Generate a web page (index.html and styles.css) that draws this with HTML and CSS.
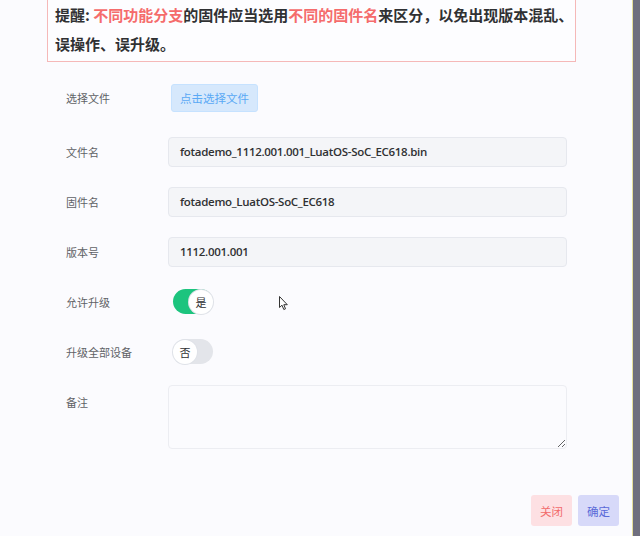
FILE: index.html
```html
<!DOCTYPE html>
<html lang="zh">
<head>
<meta charset="utf-8">
<title>固件上传</title>
<link rel="stylesheet" href="styles.css">
</head>
<body>
<div class="screen">
  <div class="dialog">
    <div class="alert">提醒: <span class="hl">不同功能分支</span>的固件应当选用<span class="hl">不同的固件名</span>来区分，以免出现版本混乱、<br>误操作、误升级。</div>
    <div class="form">
      <div class="row row-first">
        <label class="label">选择文件</label>
        <div class="control"><button class="upload" type="button">点击选择文件</button></div>
      </div>
      <div class="row">
        <label class="label">文件名</label>
        <div class="control"><div class="input">fotademo_1112.001.001_LuatOS-SoC_EC618.bin</div></div>
      </div>
      <div class="row">
        <label class="label">固件名</label>
        <div class="control"><div class="input">fotademo_LuatOS-SoC_EC618</div></div>
      </div>
      <div class="row">
        <label class="label">版本号</label>
        <div class="control"><div class="input">1112.001.001</div></div>
      </div>
      <div class="row">
        <label class="label">允许升级</label>
        <div class="control"><span class="switch on"><span class="knob">是</span></span></div>
      </div>
      <div class="row">
        <label class="label">升级全部设备</label>
        <div class="control"><span class="switch off"><span class="knob">否</span></span></div>
      </div>
      <div class="row row-top">
        <label class="label label-top">备注</label>
        <div class="control"><textarea class="textarea"></textarea></div>
      </div>
    </div>
    <div class="footer">
      <button class="btn btn-close" type="button">关闭</button>
      <button class="btn btn-ok" type="button">确定</button>
    </div>
  </div>
  <div class="strip"></div>
</div>
<svg class="cursor" width="10" height="15" viewBox="0 0 10 15"><path d="M0.5 0.5 L0.5 11.5 L3 9.2 L4.8 13.5 L6.5 12.8 L4.8 8.7 L8.3 8.7 Z" fill="#fff" stroke="#333" stroke-width="1" stroke-linejoin="round"/></svg>
</body>
</html>
```

FILE: styles.css
```css
html, body {
  margin: 0;
  padding: 0;
}
body {
  background: #6f6f7e;
  font-family: "Noto Sans CJK SC", "Noto Sans", sans-serif;
  width: 640px;
  height: 536px;
  overflow: hidden;
  position: relative;
}
.screen {
  display: flex;
  height: 536px;
}
.dialog {
  width: 633px;
  flex: none;
  background: #fbfbfe;
  padding-left: 47px;
  box-sizing: border-box;
  border-right: 1px solid #e6df9a;
  overflow: hidden;
}
.strip {
  flex: 1;
  background: #6f6f7e;
}
.alert {
  width: 529px;
  box-sizing: border-box;
  margin-top: -11px;
  padding: 10px 7px 3px;
  border: 1px solid #f5b8b8;
  background: #fdfdff;
  font-size: 15px;
  font-weight: 700;
  line-height: 29px;
  color: #303133;
  white-space: nowrap;
}
.hl {
  color: #f56c6c;
}
.form {
  margin-top: 7px;
  padding-left: 19px;
}
.row {
  display: flex;
  align-items: center;
  height: 50px;
}
.row-first {
  height: 58px;
}
.row-top {
  align-items: flex-start;
  height: auto;
  padding-top: 8px;
}
.label {
  width: 102px;
  flex: none;
  font-size: 11px;
  color: #606266;
}
.label-top {
  line-height: 34px;
}
.control {
  width: 399px;
}
.upload {
  margin-left: 3px;
  height: 28px;
  padding: 0 8px;
  border: 1px solid #c6e2ff;
  border-radius: 3px;
  background: #d6e8fc;
  color: #5aa9f5;
  font-family: "Noto Sans CJK SC", sans-serif;
  font-size: 11.5px;
}
.input {
  height: 30px;
  box-sizing: border-box;
  border: 1px solid #e6e8ee;
  border-radius: 4px;
  background: #f4f5f8;
  padding-left: 11px;
  line-height: 28px;
  font-family: "Open Sans", "Noto Sans", sans-serif;
  font-weight: 600;
  font-size: 11.5px;
  letter-spacing: -0.3px;
  color: #303133;
}
.switch {
  margin-left: 5px;
  display: inline-flex;
  align-items: center;
  width: 40px;
  height: 25px;
  border-radius: 13px;
  box-sizing: border-box;
  vertical-align: middle;
  margin-top: -5px;
}
.switch.on {
  background: #1cc47e;
  justify-content: flex-end;
}
.switch.off {
  background: #e3e5ea;
  justify-content: flex-start;
}
.knob {
  width: 24px;
  height: 24px;
  border-radius: 50%;
  background: #fff;
  box-shadow: 0 0 0 1px #dfe2e8;
  display: flex;
  align-items: center;
  justify-content: center;
  font-size: 11px;
  color: #303133;
}
.textarea {
  display: block;
  width: 399px;
  height: 64px;
  box-sizing: border-box;
  border: 1px solid #ecedf2;
  border-radius: 4px;
  background: #fbfbfe;
  margin: 0;
}
.footer {
  display: flex;
  justify-content: flex-end;
  gap: 6px;
  padding-top: 46px;
  padding-right: 13px;
}
.btn {
  height: 31px;
  padding: 0 9px;
  border: none;
  border-radius: 3px;
  font-family: "Noto Sans CJK SC", sans-serif;
  font-size: 11.5px;
}
.btn-close {
  background: #fde0e3;
  color: #f26b6b;
}
.btn-ok {
  background: #d7d9f9;
  color: #5a6ad8;
}
.cursor {
  position: absolute;
  left: 279px;
  top: 296px;
}
```
